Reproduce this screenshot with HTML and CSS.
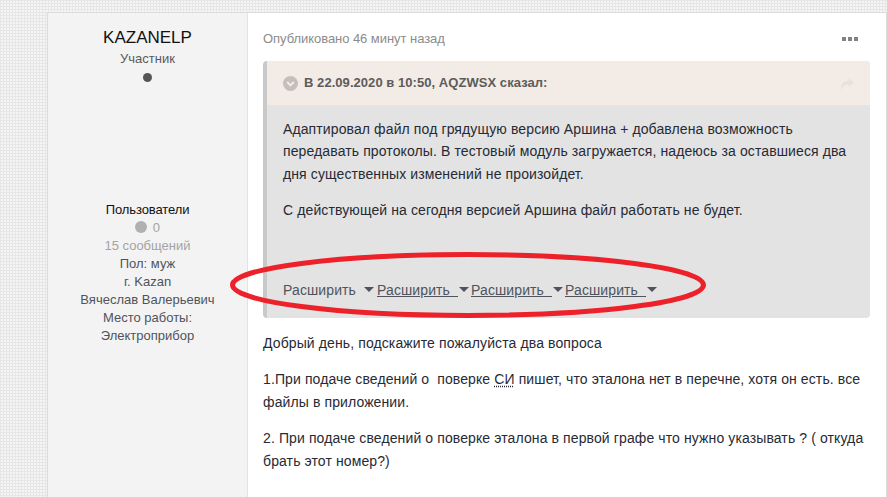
FILE: index.html
```html
<!DOCTYPE html>
<html lang="ru">
<head>
<meta charset="utf-8">
<title>Сообщение</title>
<link rel="stylesheet" href="styles.css">
</head>
<body>
<article class="post">
  <aside class="author">
    <h3 class="name">KAZANELP</h3>
    <div class="rank">Участник</div>
    <div class="pip"></div>
    <ul class="info">
      <li class="group">Пользователи</li>
      <li class="muted"><span class="rep-dot"></span> 0</li>
      <li class="muted">15 сообщений</li>
      <li>Пол: муж</li>
      <li>г. Kazan</li>
      <li>Вячеслав Валерьевич</li>
      <li>Место работы:</li>
      <li>Электроприбор</li>
    </ul>
  </aside>
  <main class="content">
    <header class="meta">
      <span>Опубликовано 46 минут назад</span>
      <span class="dots"><i></i><i></i><i></i></span>
    </header>
    <blockquote class="quote">
      <div class="quote-head">
        <svg class="chev" width="15" height="15" viewBox="0 0 16 16"><circle cx="8" cy="8" r="8" fill="#c4bfba"/><path d="M4.500 6.500 8 10l3.500-3.500" fill="none" stroke="#f3ebe5" stroke-width="2.200"/></svg>
        <b>В 22.09.2020 в 10:50, AQZWSX сказал:</b>
        <svg class="share" width="14" height="13" viewBox="0 0 14 13"><path d="M8.500 0 14 4.500 8.500 9V6.200C5 6.200 2.500 7.500 1.500 12.500.3 8 2 3 8.500 2.800Z" fill="#e9e2dc"/></svg>
      </div>
      <div class="quote-body">
        <p>Адаптировал файл под грядущую версию Аршина + добавлена возможность передавать протоколы. В тестовый модуль загружается, надеюсь за оставшиеся два дня существенных изменений не произойдет.</p>
        <p>С действующей на сегодня версией Аршина файл работать не будет.</p>
        <div class="expands">
          <span class="exp"><span class="label">Расширить&nbsp;&nbsp;</span><i class="caret"></i></span>
          <a class="exp link"><span class="label">Расширить&nbsp;&nbsp;</span><i class="caret"></i></a>
          <a class="exp link"><span class="label">Расширить&nbsp;&nbsp;</span><i class="caret"></i></a>
          <a class="exp link"><span class="label">Расширить&nbsp;&nbsp;</span><i class="caret"></i></a>
        </div>
      </div>
    </blockquote>
    <p>Добрый день, подскажите пожалуйста два вопроса</p>
    <p>1.При подаче сведений о &nbsp;поверке <span class="abbr">СИ</span> пишет, что эталона нет в перечне, хотя он есть. все файлы в приложении.</p>
    <p>2. При подаче сведений о поверке эталона в первой графе что нужно указывать ? ( откуда брать этот номер?)</p>
  </main>
</article>
<svg class="ring" width="887" height="497" viewBox="0 0 887 497"><ellipse cx="468" cy="285" rx="235.500" ry="30.500" fill="none" stroke="#ed2129" stroke-width="5"/></svg>
</body>
</html>
```
FILE: styles.css
```css
* { box-sizing: border-box; }
html, body { height: 100%; }
body {
  margin: 0;
  overflow: hidden;
  padding: 12px 0 0 47px;
  font: 14px/22.4px "Liberation Sans", Arial, sans-serif;
  color: #272a34;
  background-color: #f5f5f5;
  background-image: linear-gradient(#e6e6e6 1px, transparent 1px), linear-gradient(90deg, #e6e6e6 1px, transparent 1px);
  background-size: 3px 3px;
}
.post {
  display: flex;
  width: 840px;
  height: 485px;
  background: #fff;
  border: 1px solid #dcdcdc;
  border-width: 1px 1px 0 1px;
}
.author {
  flex: 0 0 200px;
  background: #f3f3f3;
  border-right: 1px solid #e3e3e3;
  text-align: center;
  padding-top: 15px;
}
.name {
  margin: 0;
  font-size: 17px;
  font-weight: 400;
  line-height: 20px;
  color: #111;
}
.rank { font-size: 13px; line-height: 22px; color: #5a5a5a; }
.pip { width: 9px; height: 9px; border-radius: 50%; background: #555; margin: 3px auto 0; }
.info { list-style: none; margin: 119px 0 0; padding: 0; font-size: 13px; line-height: 18px; color: #50535c; }
.group { color: #111; letter-spacing: -0.1px; }
.muted { color: #a3a3a3; }
.rep-dot { display: inline-block; width: 12px; height: 12px; border-radius: 50%; background: #b0b0b0; vertical-align: -1px; margin-right: 2px; }
.content { flex: 1; padding: 14px 16px 0 15px; letter-spacing: 0.11px; }
.meta { display: flex; justify-content: space-between; align-items: center; font-size: 13px; letter-spacing: -0.05px; line-height: 24px; color: #8c8c8c; margin-bottom: 10px; }
.dots { display: flex; gap: 2px; margin-right: 12px; }
.dots i { width: 4px; height: 4px; background: #7f8388; }
.quote {
  margin: 0 0 14px;
  border-left: 4px solid #c9c9c9;
  border-radius: 4px;
  background: #e3e3e3;
  overflow: hidden;
  width: 607px;
  height: 257px;
}
.quote-head {
  display: flex;
  align-items: center;
  height: 44px;
  padding: 0 16px;
  background: #f3ebe5;
  font-size: 13px;
  letter-spacing: 0.05px;
  color: #5c5c5c;
}
.chev { margin-right: 6px; }
.share { margin-left: auto; margin-top: 3px; }
.quote-body { padding: 13px 16px 0; color: #272a34; }
.quote-body p { margin: 0 0 14px; }
.expands { display: flex; margin-top: 57px; color: #50535c; }
.exp { display: inline-flex; align-items: center; width: 94px; white-space: nowrap; }
.label { width: 81px; white-space: pre; }
.link .label { text-decoration: underline; }
.link .caret { margin-left: 1px; }
.caret { display: inline-block; border: 5px solid transparent; border-top-color: #50535c; border-bottom: 0; }
.content > p { margin: 0 0 14px; width: 607px; }
.abbr { text-decoration: underline dotted; }
.ring { position: absolute; left: 0; top: 0; pointer-events: none; }
```
